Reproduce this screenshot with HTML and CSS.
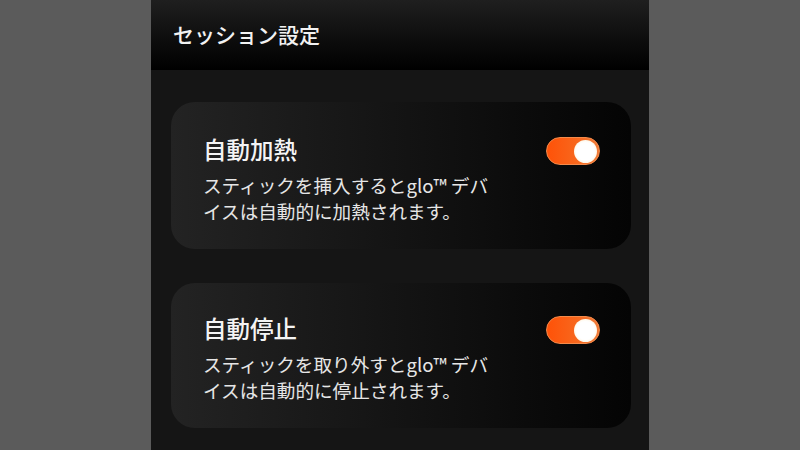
FILE: index.html
```html
<!DOCTYPE html>
<html lang="ja">
<head>
<meta charset="utf-8">
<title>セッション設定</title>
<link rel="stylesheet" href="styles.css">
</head>
<body>
<div class="phone">
  <header class="topbar">
    <h1 class="topbar-title">セッション設定</h1>
  </header>
  <main class="list">
    <section class="card">
      <div class="card-text">
        <h2 class="card-title">自動加熱</h2>
        <p class="card-desc">スティックを挿入するとglo™ デバ<br>イスは自動的に加熱されます。</p>
      </div>
      <div class="toggle on"><span class="knob"></span></div>
    </section>
    <section class="card card-second">
      <div class="card-text">
        <h2 class="card-title">自動停止</h2>
        <p class="card-desc">スティックを取り外すとglo™ デバ<br>イスは自動的に停止されます。</p>
      </div>
      <div class="toggle on"><span class="knob"></span></div>
    </section>
  </main>
</div>
</body>
</html>
```

FILE: styles.css
```css
* { box-sizing: border-box; }
html, body {
  margin: 0;
  padding: 0;
  height: 100%;
}
body {
  background: #5b5b5b;
  font-family: "Noto Sans CJK JP", "Noto Sans", sans-serif;
  display: flex;
  justify-content: center;
  overflow: hidden;
}
.phone {
  width: 498px;
  height: 450px;
  background: #151515;
  display: flex;
  flex-direction: column;
}
.topbar {
  height: 70px;
  background: linear-gradient(to bottom, #1f1f1f 0%, #0c0c0c 60%, #000 100%);
  display: flex;
  align-items: center;
  padding: 0 22px 3px;
}
.topbar-title {
  margin: 0;
  font-size: 21px;
  font-weight: 500;
  color: #f2f2f2;
}
.list {
  padding: 32px 18px 0 20px;
  display: flex;
  flex-direction: column;
  gap: 34px;
}
.card {
  height: 147px;
  border-radius: 24px;
  background: linear-gradient(to right, #232323 0%, #151515 45%, #040404 100%);
  padding: 32px 31px 0 32px;
  display: flex;
  justify-content: space-between;
  align-items: flex-start;
}
.card-second {
  height: 145px;
  padding-top: 30px;
}
.card-title {
  margin: 0;
  font-size: 23.5px;
  line-height: 30px;
  font-weight: 500;
  color: #f4f4f4;
}
.card-desc {
  margin: 8px 0 0;
  font-size: 18.6px;
  line-height: 26px;
  color: #e6e6e6;
  white-space: nowrap;
}
.toggle {
  width: 54px;
  height: 28px;
  margin-top: 3px;
  border-radius: 14px;
  border: 1px solid #f58a4a;
  background: linear-gradient(to right, #ff5208 0%, #f8661c 55%, #ef7a38 100%);
  display: flex;
  align-items: center;
  justify-content: flex-end;
  padding: 0 2px;
}
.knob {
  width: 23px;
  height: 23px;
  border-radius: 50%;
  background: radial-gradient(circle at 50% 50%, #ffffff 55%, #fff4dc 80%, #ffe3b8 100%);
}
```
